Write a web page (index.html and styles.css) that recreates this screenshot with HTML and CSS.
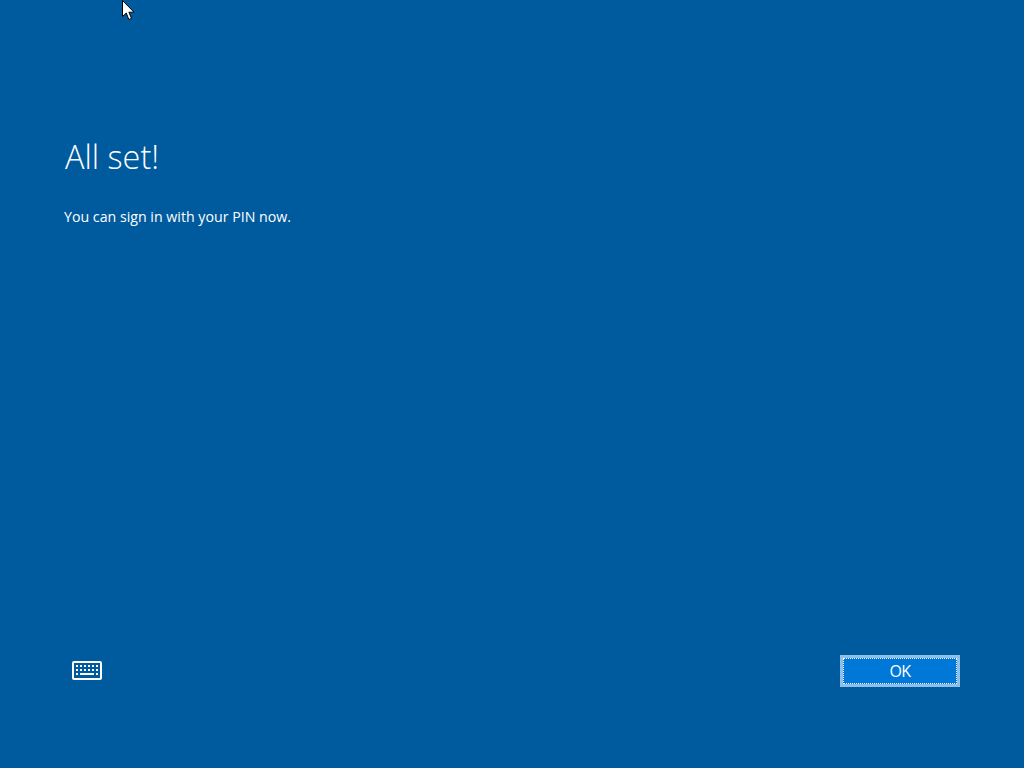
FILE: index.html
```html
<!DOCTYPE html>
<html lang="en">
<head>
<meta charset="utf-8">
<title>All set!</title>
<link rel="stylesheet" href="styles.css">
</head>
<body>
<svg class="cursor" width="14" height="21" viewBox="0 0 14 21"><path d="M.5.5V16.5L4.300 13 6.800 19.500 9.500 18.400 6.900 12.200H12Z" fill="#fff" stroke="#000" stroke-width="1"/></svg>
<main class="content">
<h1 class="title">All set!</h1>
<p class="message">You can sign in with your PIN now.</p>
</main>
<footer class="footer">
<svg class="keyboard" width="30" height="19" viewBox="0 0 30 19" fill="#fff">
<path fill-rule="evenodd" d="M2 0H28A2 2 0 0 1 30 2V17A2 2 0 0 1 28 19H2A2 2 0 0 1 0 17V2A2 2 0 0 1 2 0ZM2 2V17H28V2Z"/>
<rect x="4" y="4" width="2" height="2"/><rect x="8" y="4" width="2" height="2"/><rect x="12" y="4" width="2" height="2"/><rect x="16" y="4" width="2" height="2"/><rect x="20" y="4" width="2" height="2"/><rect x="24" y="4" width="2" height="2"/>
<rect x="4" y="8" width="2" height="2"/><rect x="8" y="8" width="2" height="2"/><rect x="12" y="8" width="2" height="2"/><rect x="16" y="8" width="2" height="2"/><rect x="20" y="8" width="2" height="2"/><rect x="24" y="8" width="2" height="2"/>
<rect x="4" y="12" width="2" height="2"/><rect x="8" y="12" width="14" height="2"/><rect x="24" y="12" width="2" height="2"/>
</svg>
<button class="ok" type="button"><span class="ok-label">OK</span></button>
</footer>
</body>
</html>
```
FILE: styles.css
```css
html, body {
  margin: 0;
  height: 100%;
}
body {
  position: relative;
  width: 1024px;
  height: 768px;
  overflow: hidden;
  background: #005a9e;
  color: #fff;
  font-family: "Open Sans", "Noto Sans", sans-serif;
  display: flex;
  flex-direction: column;
  justify-content: space-between;
  box-sizing: border-box;
  padding: 133px 64px 81px;
}
.cursor {
  position: absolute;
  left: 122px;
  top: 0;
}
.title {
  margin: 0;
  font-size: 32.4px;
  font-weight: 300;
  line-height: 46px;
  padding-left: 1px;
}
.message {
  margin: 28px 0 0;
  font-size: 14.2px;
  line-height: 20px;
}
.footer {
  display: flex;
  justify-content: space-between;
  align-items: center;
}
.keyboard {
  margin: 0 0 1px 8px;
}
.ok {
  width: 120px;
  height: 32px;
  box-sizing: border-box;
  padding: 1px;
  border: 3px solid #8cc0ea;
  background: #0078d7;
  color: #fff;
  font: 16px "Open Sans", sans-serif;
  letter-spacing: -0.6px;
}
.ok-label {
  display: flex;
  align-items: center;
  justify-content: center;
  height: 100%;
  outline: 1px dotted #fff;
}
```
